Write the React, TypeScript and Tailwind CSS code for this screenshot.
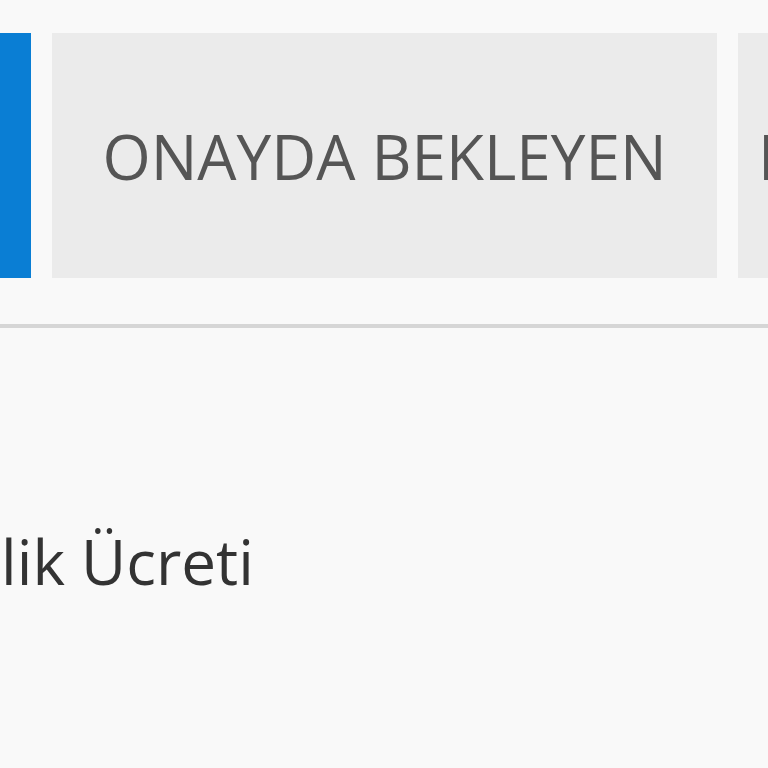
import React from 'react';

export default function App() {
  return (
    <div className="w-[768px] h-[768px] overflow-hidden bg-[#f9f9f9] font-['Open_Sans',sans-serif]">
      {/* Tabs */}
      <div className="flex gap-[21px] pt-[33px] -ml-[40px]">
        <div className="w-[71px] h-[245px] shrink-0 bg-[#0a7ed4]" />
        <div className="w-[665px] h-[245px] shrink-0 bg-[#ebebeb] flex items-center justify-center text-[62px] leading-none text-[#555555]">
          ONAYDA BEKLEYEN
        </div>
        <div className="w-[300px] h-[245px] shrink-0 bg-[#ebebeb] flex items-center pl-[20px] text-[62px] leading-none text-[#555555]">
          REDDEDİLEN
        </div>
      </div>

      <div className="mt-[46px] h-[4px] bg-[#d6d6d6]" />

      {/* Row */}
      <div className="mt-[202px] -ml-[110px] whitespace-nowrap text-[62px] leading-none text-[#333333]">
        Üyelik Ücreti
      </div>
    </div>
  );
}
